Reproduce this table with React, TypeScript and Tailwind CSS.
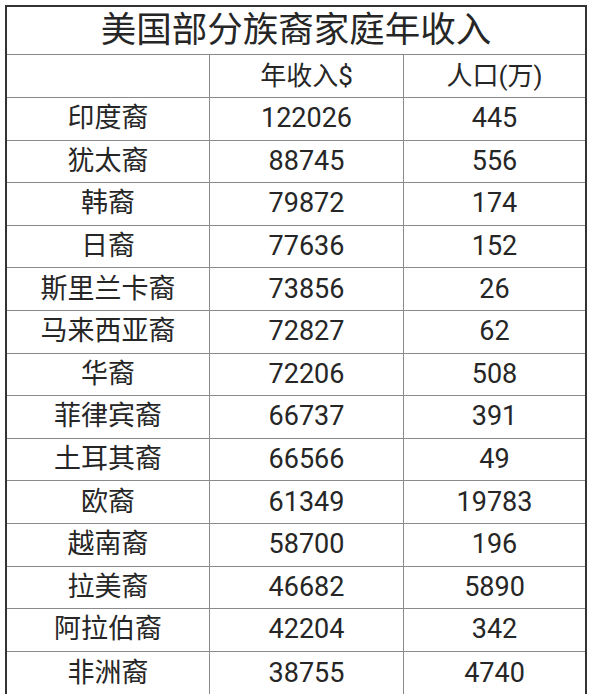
const rows: [string, string, string][] = [
  ['印度裔', '122026', '445'],
  ['犹太裔', '88745', '556'],
  ['韩裔', '79872', '174'],
  ['日裔', '77636', '152'],
  ['斯里兰卡裔', '73856', '26'],
  ['马来西亚裔', '72827', '62'],
  ['华裔', '72206', '508'],
  ['菲律宾裔', '66737', '391'],
  ['土耳其裔', '66566', '49'],
  ['欧裔', '61349', '19783'],
  ['越南裔', '58700', '196'],
  ['拉美裔', '46682', '5890'],
  ['阿拉伯裔', '42204', '342'],
  ['非洲裔', '38755', '4740'],
];

const cell = 'flex items-center justify-center border-[#8a8a8a]';

export default function App() {
  return (
    <div className="h-[696px] w-[594px] overflow-hidden bg-white pt-[5px] pl-[5px] font-['Roboto','Noto_Sans_CJK_SC',sans-serif] text-[#262626]">
      <div className="w-[582px] border-x-2 border-t-2 border-[#333]">
        <div className="flex h-[48px] items-center justify-center border-b border-[#8a8a8a] text-[35.5px] leading-none">
          美国部分族裔家庭年收入
        </div>
        <div className="grid h-[43px] grid-cols-[203px_194px_181px] text-[26px] leading-none">
          <div className={`${cell} border-r border-b`}></div>
          <div className={`${cell} border-r border-b`}>年收入$</div>
          <div className={`${cell} border-b`}>人口(万)</div>
        </div>
        {rows.map((r, i) => {
          const last = i === rows.length - 1;
          return (
            <div key={r[0]} className="grid h-[42.6px] grid-cols-[203px_194px_181px] text-[27px] leading-none">
              <div className={`${cell} border-r ${last ? '' : 'border-b'}`}>{r[0]}</div>
              <div className={`${cell} border-r ${last ? '' : 'border-b'}`}>{r[1]}</div>
              <div className={`${cell} ${last ? '' : 'border-b'}`}>{r[2]}</div>
            </div>
          );
        })}
      </div>
    </div>
  );
}
